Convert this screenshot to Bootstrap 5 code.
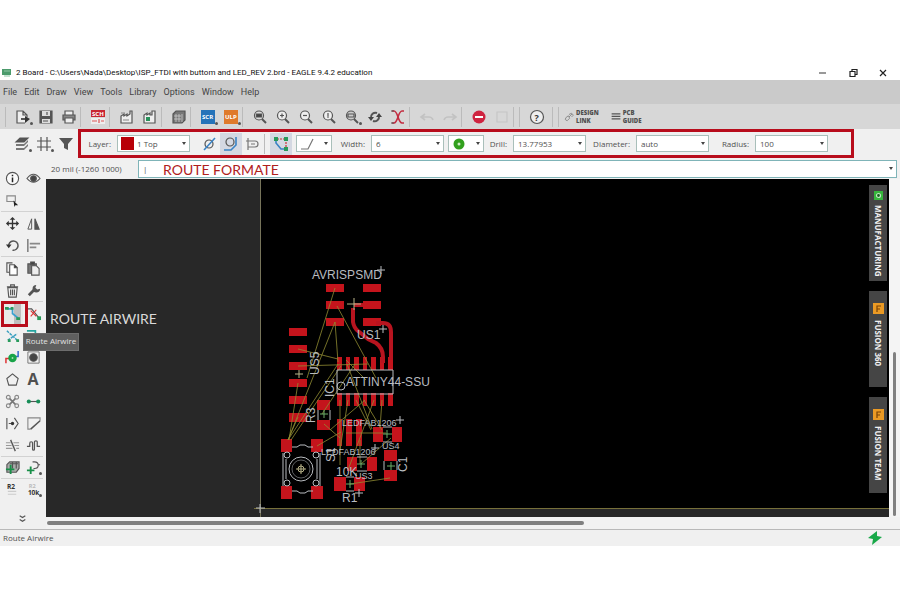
<!DOCTYPE html>
<html lang="en">
<head>
<meta charset="utf-8">
<meta name="viewport" content="width=device-width, initial-scale=1">
<title>2 Board - EAGLE 9.4.2 education</title>
<link rel="stylesheet" href="https://cdn.jsdelivr.net/npm/bootstrap@5.3.0/dist/css/bootstrap.min.css">
<style>
body{font-family:"Open Sans","Noto Sans",sans-serif;font-size:9px;line-height:12px;color:#505050;background:#fff;padding-top:66px}
button,select,input{font:inherit;color:inherit}
svg{display:block;flex:none}
.ic{width:16px;height:16px;fill:none;stroke:#555;stroke-width:1.2;overflow:visible}
.ic text{stroke:none;font-weight:700}
.titlebar{height:14px;color:#111;font-family:Roboto,sans-serif;font-size:8px;padding:0 2px}
.titlebar .ic{width:10px;height:10px}
.tool.winbtn{width:30px}
.menubar{height:24px;background:#cacaca;padding-left:3px;gap:7px;font-family:Roboto,sans-serif}
.menubar a{color:#444;text-decoration:none}
.toolbar-main{height:25px;background:#d7d7d7;padding-left:5px}
.tool{width:23px;height:22px;border:0;padding:0;background:none;display:flex;align-items:center;justify-content:center;position:relative}
.tool.drop::after,.ptool.drop::after{content:"";position:absolute;right:1px;bottom:3px;width:3px;height:3px;border-radius:50%;background:#555}
.sep{width:6px;height:20px;flex:none;border-left:1px solid #bbb}
.linkbtn{border:0;background:none;padding:0 6px;font-size:6px;font-weight:700;text-align:left;gap:2px}
.linkbtn b{display:block;line-height:8px}
.linkbtn .ic{width:10px;height:10px}
.params{height:29px;background:#f0f0f0;padding-left:11px}
.params .tool{width:22px}
.marked{border:3px solid #b80d1c;margin-right:46px;margin-left:1px;height:29px}
.tool.on{background:#d4d8e2}
.field{justify-content:flex-end;gap:6px;font-size:8px}
.w-a{width:109px}.w-b{width:112px}.w-c{width:102px}.w-d{width:123px}.w-e{width:119px}
.combo{width:73px;height:17px;background:#fff;border:1px solid #a9bfba;padding:0 3px}
.combo select,.combo input{border:0;background:none;appearance:none;padding:0 0 0 1px;min-width:0;flex:1;outline:0}
.combo.small-combo{width:36px}
.combo.small-combo select{color:transparent;padding:0}
.combo.small-combo option{color:#444}
.arrow{width:4px;height:3px;fill:#444}
.swatch{width:13px;height:13px;background:#b80008;flex:none;margin-right:2px}
.palette{width:46px;background:#f0f0f0;padding:9px 3px 0 1px}
.grp{border-bottom:1px solid #d2d2d2;display:grid;grid-template-columns:22px 20px}
.grp.tight{margin-top:-1px}
.ptool{height:22px;border:0;padding:0;background:none;display:flex;align-items:center;justify-content:center;position:relative}
.ptool .ic{width:15px;height:15px}
.airframe{position:absolute;left:0;top:-1px;width:27px;height:26px;border:3px solid #b80d1c;z-index:3}
.ptool.on{background:linear-gradient(90deg,#e9e9e9 60%,#bebebe 60% 90%,#e9e9e9 90%)}
.tip{position:absolute;left:22px;top:31px;width:56px;height:18px;background:#5f5f5f;color:#e2e2e2;font-size:8px;line-height:14px;border:1px solid #6d6d6d;z-index:4;white-space:nowrap}
.cmdrow{height:21px;background:#f0f0f0;font-size:8px;padding:0 3px 0 5px}
.cmdrow label{width:87px}
.cmd{height:18px;border:1px solid #7fb4b8}
.note{position:absolute;font-family:Lato,sans-serif;font-size:14px;line-height:18px;white-space:nowrap;pointer-events:none}
.canvas{background:#282828}
.tabs{position:absolute;top:6px;right:2px;gap:10px}
.sidetab{width:18px;height:96px;border:0;background:#454545;color:#f2f2f2;font-size:8px;line-height:16px;font-weight:700;padding:5px 0;gap:4px}
.sidetab.fus{padding-top:12px;gap:6px}
.sidetab span{writing-mode:vertical-rl}
.sidetab .ic{width:11px;height:11px}
.vscroll{width:11px;background:#f4f4f4;padding:173px 4px 1px}
.hscroll{height:12px;background:#f2f2f2;padding:4px 0 0 1px}
.thumb{background:#808080;border-radius:2px}
.hscroll .thumb{width:63%;height:4px}
.statusbar{height:17px;background:#f0f0f0;border-top:1px solid #b9b9b9;padding:0 18px 0 3px;font-size:8px}
.statusbar .ic{width:14px;height:14px}
.silk{fill:none;stroke:#b9bcc0;stroke-width:1}
.silktext{font-family:"Liberation Sans",sans-serif;fill:#b9bcc0;font-size:12px}
.silktext .fine{font-size:9px}
</style>
<script src="https://cdn.jsdelivr.net/npm/bootstrap@5.3.0/dist/js/bootstrap.bundle.min.js"></script>
</head>
<body>
<header>
<div class="titlebar d-flex align-items-center">
<svg class="ic me-1" viewBox="0 0 10 10"><path d="M0 1h9v6H0z" fill="#4c9b6c" stroke="none"/><path d="M2 8h6M2 3h6" stroke="#8fc7a6"/></svg>
<span>2 Board - C:\Users\Nada\Desktop\ISP_FTDI with buttom and LED_REV 2.brd - EAGLE 9.4.2 education</span>
<div class="ms-auto d-flex">
<button class="tool winbtn" aria-label="Minimize"><svg class="ic" viewBox="0 0 10 10"><path d="M1 5h7"/></svg></button>
<button class="tool winbtn" aria-label="Restore"><svg class="ic" viewBox="0 0 10 10"><path d="M2 3.500h5v5H2zM4 3V1.500h5v5H7" stroke="#222"/></svg></button>
<button class="tool winbtn" aria-label="Close"><svg class="ic" viewBox="0 0 10 10"><path d="M2 2l6 6M8 2l-6 6" stroke="#222"/></svg></button>
</div></div>
<nav class="menubar d-flex align-items-center" aria-label="Menu"><a href="#">File</a><a href="#">Edit</a><a href="#">Draw</a><a href="#">View</a><a href="#">Tools</a><a href="#">Library</a><a href="#">Options</a><a href="#">Window</a><a href="#">Help</a></nav>
<div class="toolbar-main d-flex align-items-center" role="toolbar" aria-label="Main">
<span class="sep"></span>
<button class="tool drop" aria-label="Open"><svg class="ic" viewBox="0 0 16 16"><path d="M10 14H2V2h6l4 4v2M8 2v4h4" fill="#eee"/><path d="M6 10h5" stroke-width="2"/><path d="M10 7l5 3-5 4z" fill="#333" stroke="none"/></svg></button>
<button class="tool" aria-label="Save"><svg class="ic" viewBox="0 0 16 16"><path d="M2 2h12v12H2z" fill="#555"/><path d="M4 2h8v5H4zM4 10h8v4H4z" fill="#ddd" stroke="none"/><path d="M9 3v3M5 12h5"/></svg></button>
<button class="tool" aria-label="Print"><svg class="ic" viewBox="0 0 16 16"><path d="M4 6V2h8v4" fill="#eee"/><path d="M2 6h12v5H2z" fill="#888"/><path d="M4 9h8v5H4z" fill="#eee"/></svg></button>
<span class="sep"></span>
<button class="tool" aria-label="Schematic"><svg class="ic" viewBox="0 0 16 16"><path d="M1 1h14v7H1z" fill="#c82532" stroke="none"/><path d="M1 9h14v6H1z" fill="#eee" stroke="none"/><text x="2" y="7" font-size="6" fill="#fff">SCH</text><path d="M2 12h5M9 10v4M11 12h3" stroke="#d55"/></svg></button>
<span class="sep"></span>
<button class="tool" aria-label="CAM"><svg class="ic" viewBox="0 0 16 16"><path d="M2 14V7l3-2v2l3-2v2l3-2V2h2v12z" fill="#eee"/><path d="M4 11h6M2 4h4" stroke="#888"/></svg></button>
<button class="tool" aria-label="Manufacturing preview"><svg class="ic" viewBox="0 0 16 16"><path d="M2 14V6l3-2v2l3-2v2h2V2h3v12z" fill="#eee"/><path d="M4 8h4v4H4z" fill="#27925a" stroke="none"/></svg></button>
<span class="sep"></span>
<button class="tool" aria-label="Library"><svg class="ic" viewBox="0 0 16 16"><path d="M2 5l3-3h9v9l-3 3H2z" fill="#777"/><path d="M3 7h7M3 10h7M5 5v8M8 5v8M11 5v8" stroke="#ccc" stroke-width=".8"/></svg></button>
<span class="sep"></span>
<button class="tool drop" aria-label="Script"><svg class="ic" viewBox="0 0 16 16"><path d="M1 1h14v14H1z" fill="#2573b9" stroke="none"/><text x="2" y="10" font-size="6" fill="#fff">SCR</text></svg></button>
<button class="tool drop" aria-label="ULP"><svg class="ic" viewBox="0 0 16 16"><path d="M1 1h14v14H1z" fill="#df7a2b" stroke="none"/><text x="2" y="10" font-size="6" fill="#fff">ULP</text></svg></button>
<span class="sep"></span>
<button class="tool" aria-label="Zoom fit"><svg class="ic" viewBox="0 0 16 16"><circle cx="7" cy="6.500" r="4.500" fill="#ddd"/><path d="M10 10l4 4" stroke-width="2"/><path d="M4.500 5h5v3h-5z" fill="#444"/></svg></button>
<button class="tool" aria-label="Zoom in"><svg class="ic" viewBox="0 0 16 16"><circle cx="7" cy="6.500" r="4.500" fill="#eee"/><path d="M10 10l4 4" stroke-width="2"/><path d="M5 6.500h4M7 4.500v4"/></svg></button>
<button class="tool" aria-label="Zoom out"><svg class="ic" viewBox="0 0 16 16"><circle cx="7" cy="6.500" r="4.500" fill="#eee"/><path d="M10 10l4 4" stroke-width="2"/><path d="M5 6.500h4"/></svg></button>
<button class="tool" aria-label="Zoom redraw"><svg class="ic" viewBox="0 0 16 16"><circle cx="7" cy="6.500" r="4.500" fill="#eee"/><path d="M10 10l4 4" stroke-width="2"/><path d="M7 4v3M6 8h2"/></svg></button>
<button class="tool drop" aria-label="Zoom select"><svg class="ic" viewBox="0 0 16 16"><circle cx="7" cy="6.500" r="4.500" fill="#ccc"/><path d="M10 10l4 4" stroke-width="2"/><path d="M4 5h6v3H4z"/></svg></button>
<button class="tool" aria-label="Refresh"><svg class="ic" viewBox="0 0 16 16"><path d="M4 9a4.500 4.500 0 0 1 6-5M12 7a4.500 4.500 0 0 1-6 5" stroke-width="2"/><path d="M1 8h6l-3 4zM9 8h6l-3-4z" fill="#444" stroke="none"/></svg></button>
<button class="tool" aria-label="Ripup all"><svg class="ic" viewBox="0 0 16 16"><path d="M2 2h2c4 0 4 12 8 12h2" stroke="#c32c40" stroke-width="1.600"/><path d="M14 2h-2C8 2 8 14 4 14H2" stroke="#c32c40" stroke-width="1.600"/><path d="M1 2h3M1 14h3" stroke="#555"/></svg></button>
<span class="sep"></span>
<button class="tool" aria-label="Undo"><svg class="ic" viewBox="0 0 16 16"><path d="M6 5L2 8l4 3M3 8h7q3 0 4 3" stroke="#c2c2c2" stroke-width="1.600"/></svg></button>
<button class="tool" aria-label="Redo"><svg class="ic" viewBox="0 0 16 16"><path d="M10 5l4 3-4 3M13 8H6q-3 0-4 3" stroke="#c2c2c2" stroke-width="1.600"/></svg></button>
<span class="sep"></span>
<button class="tool" aria-label="Stop"><svg class="ic" viewBox="0 0 16 16"><circle cx="8" cy="8" r="6.500" fill="#cf2440" stroke="none"/><path d="M4 8h8" stroke="#fff" stroke-width="2"/></svg></button>
<button class="tool" aria-label="Go"><svg class="ic" viewBox="0 0 16 16"><path d="M3 3h10v10H3z" stroke="#c6c6c6"/></svg></button>
<span class="sep"></span><span class="sep"></span>
<button class="tool" aria-label="Help"><svg class="ic" viewBox="0 0 16 16"><circle cx="8" cy="8" r="6.500" fill="#eee"/><text x="5.500" y="11.500" font-size="9" fill="#333">?</text></svg></button>
<span class="sep ms-1"></span><span class="sep"></span>
<button class="linkbtn d-flex align-items-center ps-0"><svg class="ic" viewBox="0 0 16 16"><path d="M8 8l5-5M3 9l4-3 2 4-4 4-3-2zM8 4l4-2 3 3-3 3" stroke="#777"/></svg><span><b>DESIGN</b><b>LINK</b></span></button>
<button class="linkbtn d-flex align-items-center"><svg class="ic" viewBox="0 0 16 16"><path d="M1 3h14M1 7h14M1 11h14" stroke-width="2"/></svg><span><b>PCB</b><b>GUIDE</b></span></button>
</div>
<div class="params d-flex align-items-center">
<button class="tool drop" aria-label="Layers"><svg class="ic" viewBox="0 0 16 16"><path d="M2 6l4-4h8l-4 4z" fill="#555"/><path d="M2 8h8l4-4v2l-4 4H2zM2 12h8l4-4v2l-4 4H2z" fill="#777" stroke="none"/></svg></button>
<button class="tool drop" aria-label="Grid"><svg class="ic" viewBox="0 0 16 16"><path d="M5 1v14M11 1v14M1 5h14M1 11h14"/></svg></button>
<button class="tool" aria-label="Filter"><svg class="ic" viewBox="0 0 16 16"><path d="M1 2h14L10 8v6l-4-2V8z" fill="#555" stroke="none"/></svg></button>
<div class="marked flex-fill d-flex align-items-center">
<div class="field w-a d-flex align-items-center"><label for="layer">Layer:</label><div class="combo d-flex align-items-center"><span class="swatch"></span><select id="layer"><option>1 Top</option></select><svg class="arrow" viewBox="0 0 4 3"><path d="M0 0h4L2 3z"/></svg></div></div>
<span class="ms-2"></span>
<button class="tool" aria-label="Ignore obstacles"><svg class="ic" viewBox="0 0 16 16"><circle cx="8" cy="8" r="4"/><path d="M3 14L14 2" stroke="#3a83c5" stroke-width="1.600"/></svg></button>
<button class="tool on" aria-label="Walkaround obstacles"><svg class="ic" viewBox="0 0 16 16"><circle cx="7" cy="6" r="4"/><path d="M1 14h7l5-5V1" stroke="#3a83c5" stroke-width="1.600"/></svg></button>
<button class="tool" aria-label="Push obstacles"><svg class="ic" viewBox="0 0 16 16"><path d="M3 2v12M1 5h9a3 3 0 0 1 0 6H3M6 8h4" stroke="#777"/></svg></button>
<span class="sep"></span>
<button class="tool on" aria-label="Follow airwire"><svg class="ic" viewBox="0 0 16 16"><path d="M3 3v4l5 6h5" stroke="#3a83c5" stroke-width="1.600"/><path d="M4 3h9v9" stroke="#c33" stroke-dasharray="2 1"/><path d="M1 1h4v4H1zM11 11h4v4h-4z" fill="#299a5a" stroke="none"/><path d="M11 1h4v4h-4z" fill="#299a5a" stroke="none"/></svg></button>
<span class="ms-1"></span>
<div class="combo small-combo d-flex align-items-center"><svg class="ic" viewBox="0 0 16 16"><path d="M1 13h7l5-10" stroke="#777"/></svg><select aria-label="Wire bend"><option>1</option></select><svg class="arrow" viewBox="0 0 4 3"><path d="M0 0h4L2 3z"/></svg></div>
<div class="field w-b d-flex align-items-center"><label for="width">Width:</label><div class="combo d-flex align-items-center"><select id="width"><option>6</option></select><svg class="arrow" viewBox="0 0 4 3"><path d="M0 0h4L2 3z"/></svg></div></div>
<span class="ms-1"></span>
<div class="combo small-combo d-flex align-items-center"><svg class="ic" viewBox="0 0 16 16"><circle cx="7" cy="8" r="5.500" fill="#32a01d" stroke="none"/><circle cx="7" cy="8" r="1.500" fill="#cfeec4" stroke="none"/></svg><select aria-label="Via shape"><option>Round</option></select><svg class="arrow" viewBox="0 0 4 3"><path d="M0 0h4L2 3z"/></svg></div>
<div class="field w-c d-flex align-items-center"><label for="drill">Drill:</label><div class="combo d-flex align-items-center"><select id="drill"><option>13.77953</option></select><svg class="arrow" viewBox="0 0 4 3"><path d="M0 0h4L2 3z"/></svg></div></div>
<div class="field w-d d-flex align-items-center"><label for="dia">Diameter:</label><div class="combo d-flex align-items-center"><select id="dia"><option>auto</option></select><svg class="arrow" viewBox="0 0 4 3"><path d="M0 0h4L2 3z"/></svg></div></div>
<div class="field w-e d-flex align-items-center"><label for="radius">Radius:</label><div class="combo d-flex align-items-center"><select id="radius"><option>100</option></select><svg class="arrow" viewBox="0 0 4 3"><path d="M0 0h4L2 3z"/></svg></div></div>
</div></div>
</header>
<main class="d-flex">
<aside class="palette flex-shrink-0 d-flex flex-column" aria-label="Tools">
<div class="grp">
<button class="ptool" aria-label="Info"><svg class="ic" viewBox="0 0 16 16"><circle cx="8" cy="8" r="6.500" fill="#fafafa"/><path d="M8 7v5M8 4v1.500" stroke="#222" stroke-width="1.600"/></svg></button>
<button class="ptool" aria-label="Show"><svg class="ic" viewBox="0 0 16 16"><path d="M1 8q7-9 14 0q-7 8-14 0z"/><circle cx="8" cy="8" r="3" fill="#444"/></svg></button>
<button class="ptool" aria-label="Group"><svg class="ic" viewBox="0 0 16 16"><path d="M2 3h9v6H2z" stroke="#888"/><path d="M9 8l5 5h-3l-1 2z" fill="#222" stroke="none"/></svg></button>
</div>
<div class="grp">
<button class="ptool" aria-label="Move"><svg class="ic" viewBox="0 0 16 16"><path d="M3 8h10M8 3v10" stroke="#333" stroke-width="1.400"/><path d="M8 1l3 3H5zM8 15l3-3H5zM1 8l3-3v6zM15 8l-3-3v6z" fill="#333" stroke="none"/></svg></button>
<button class="ptool" aria-label="Mirror"><svg class="ic" viewBox="0 0 16 16"><path d="M6 3v11H2z" stroke-width="1"/><path d="M9.500 3v11H14z" fill="#555"/></svg></button>
<button class="ptool" aria-label="Rotate"><svg class="ic" viewBox="0 0 16 16"><path d="M4 9a5 5 0 1 1 4 4" stroke-width="1.600"/><path d="M1 7h6l-3 4z" fill="#333" stroke="none"/></svg></button>
<button class="ptool" aria-label="Align"><svg class="ic" viewBox="0 0 16 16"><path d="M2 1v14"/><path d="M4 6h11M4 10h7" stroke-width="2" stroke="#888"/></svg></button>
</div>
<div class="grp">
<button class="ptool" aria-label="Copy"><svg class="ic" viewBox="0 0 16 16"><path d="M5 12H2V2h6"/><path d="M5 4h5l3 3v8H5z" fill="#fff"/><path d="M10 4v3h3" fill="#333"/></svg></button>
<button class="ptool" aria-label="Paste"><svg class="ic" viewBox="0 0 16 16"><path d="M2 3h9v10H2z" fill="#777"/><path d="M6 5h5l3 3v7H6z" fill="#eee"/><path d="M5 1h4v3H5z" fill="#444"/></svg></button>
<button class="ptool" aria-label="Delete"><svg class="ic" viewBox="0 0 16 16"><path d="M3 5l1 10h8l1-10zM6 7v6M8 7v6M10 7v6M2 4h12M6 4V2h4v2"/></svg></button>
<button class="ptool" aria-label="Change"><svg class="ic" viewBox="0 0 16 16"><path d="M3 13l6-6" stroke-width="3"/><path d="M11 2a4 4 0 1 0 4 4l-3 1-2-2z" fill="#555" stroke="none"/></svg></button>
</div>
<div class="grp position-relative">
<button class="ptool on" aria-label="Route Airwire"><svg class="ic" viewBox="0 0 16 16"><path d="M2 3h6v5l6 5" stroke="#3aa0d0" stroke-width="1.800"/><path d="M0 1h4v3H0zM6 1h3v3H6zM12 12h4v3h-4z" fill="#299a5a" stroke="none"/></svg></button>
<button class="ptool" aria-label="Ripup"><svg class="ic" viewBox="0 0 16 16"><path d="M2 3h4l8 10" stroke="#555"/><path d="M5 5l6 6M11 4l-6 7" stroke="#d33"/><path d="M12 11h4v4h-4z" fill="#299a5a" stroke="none"/></svg></button>
<span class="airframe"></span><span class="tip text-center" role="tooltip">Route Airwire</span>
<button class="ptool" aria-label="Split"><svg class="ic" viewBox="0 0 16 16"><path d="M2 3l11 10M3 13l10-7" stroke="#3a9fc0" stroke-dasharray="3 1" stroke-width="1.600"/><path d="M3 12h3v3H3zM12 12h3v3h-3z" fill="#299a5a" stroke="none"/></svg></button>
<button class="ptool" aria-label="Route multiple"><svg class="ic" viewBox="0 0 16 16"><path d="M1 3h9v9" stroke="#27a5a0" stroke-width="1.800"/><path d="M4 8h5v6" stroke="#299a5a"/></svg></button>
<button class="ptool" aria-label="Via"><svg class="ic" viewBox="0 0 16 16"><path d="M1 14V9h4" stroke="#d33" stroke-width="1.600"/><path d="M11 7h3V1" stroke="#36c" stroke-width="1.600"/><circle cx="8" cy="8.500" r="4.500" fill="#18a348" stroke="none"/><circle cx="8" cy="8.500" r="1" fill="#a7e0b5" stroke="none"/></svg></button>
<button class="ptool" aria-label="Hole"><svg class="ic" viewBox="0 0 16 16"><path d="M2 2h12v12H2z" stroke-width=".8"/><circle cx="8" cy="8" r="4" fill="#444"/></svg></button>
<button class="ptool" aria-label="Polygon"><svg class="ic" viewBox="0 0 16 16"><path d="M8 2l6 5-2 7H4L2 7z"/></svg></button>
<button class="ptool fs-6 fw-bold lh-1 overflow-visible" aria-label="Text">A</button>
<button class="ptool" aria-label="Ratsnest"><svg class="ic" viewBox="0 0 16 16"><g stroke="#888"><circle cx="3.500" cy="3.500" r="2"/><circle cx="12.500" cy="3.500" r="2"/><circle cx="3.500" cy="12.500" r="2"/><circle cx="12.500" cy="12.500" r="2"/></g><path d="M5 5l6 6M11 5l-6 6" stroke="#777" stroke-width="1.800"/></svg></button>
<button class="ptool" aria-label="Signal"><svg class="ic" viewBox="0 0 16 16"><path d="M3 8h10"/><circle cx="3" cy="8" r="2.200" fill="#188e58" stroke="none"/><circle cx="13" cy="8" r="2.200" fill="#188e58" stroke="none"/></svg></button>
<button class="ptool" aria-label="Fanout"><svg class="ic" viewBox="0 0 16 16"><path d="M2 2v12M4 8h5M10 2l4 6-4 6"/><circle cx="8" cy="8" r="1.800" fill="#333" stroke="none"/></svg></button>
<button class="ptool" aria-label="Miter"><svg class="ic" viewBox="0 0 16 16"><path d="M15 5V2H2v12h3" stroke="#888"/><path d="M5 14L15 5" stroke-width="1.600"/></svg></button>
<button class="ptool" aria-label="Slice"><svg class="ic" viewBox="0 0 16 16"><path d="M1 5h5M1 8h6M1 11h7M9 5h6M10 8h5M12 11h3" stroke="#999"/><path d="M6 2l5 12" stroke-width="1.400"/></svg></button>
<button class="ptool" aria-label="Meander"><svg class="ic" viewBox="0 0 16 16"><path d="M1 9h3V6q0-2 1.500-2T7 6v6q0 1 1 1t1-1V4q0-1 1.500-1T12 4v5h3" stroke-width="1.300"/></svg></button>
</div>
<div class="grp tight">
<button class="ptool" aria-label="Add part"><svg class="ic" viewBox="0 0 16 16"><path d="M2 5l3-3h10v7l-3 4H2z" fill="#aaa"/><path d="M5 4h9M8 2v7M12 2v7" stroke="#555"/><path d="M1 10h9M6 5v10" stroke="#188e48" stroke-width="2"/></svg></button>
<button class="ptool drop" aria-label="Replace"><svg class="ic" viewBox="0 0 16 16"><path d="M7 2h2q4 0 4 3.500T9 9H8M13 5h2"/><path d="M1 11h8M5 7v8" stroke="#188e48" stroke-width="2"/></svg></button>
</div>
<div class="grp tight border-0">
<button class="ptool" aria-label="Name"><svg class="ic" viewBox="0 0 16 16"><text x="2" y="7" font-size="7" fill="#333">R2</text><path d="M3 10h9M3 13h9" stroke="#ccc"/></svg></button>
<button class="ptool drop" aria-label="Value"><svg class="ic" viewBox="0 0 16 16"><text x="3" y="6" font-size="6" fill="#bbb">R2</text><text x="2" y="14" font-size="7" fill="#333">10k</text></svg></button>
</div>
<button class="ptool mt-auto" aria-label="More tools"><svg class="ic" viewBox="0 0 16 16"><path d="M5 5l3 2 3-2M5 9l3 2 3-2"/></svg></button>
</aside>
<section class="flex-fill overflow-hidden">
<div class="cmdrow d-flex align-items-center position-relative">
<label for="cmd">20 mil (-1260 1000)</label>
<div class="cmd combo flex-fill d-flex align-items-center"><input id="cmd" value="|"><svg class="arrow" viewBox="0 0 4 3"><path d="M0 0h4L2 3z"/></svg></div>
<span class="note" style="left:117px;top:3px;color:#b0201c">ROUTE FORMATE</span>
</div>
<div class="d-flex">
<div class="canvas flex-fill position-relative">
<svg class="w-100" viewBox="46 179 843 338" role="img" aria-label="Board layout">
<path d="M261 179h628v329H261z" fill="#000"/>
<path d="M260.500 179v338" stroke="#77745a"/><path d="M254 508.500h635" stroke="#77703a"/>
<g fill="#c4141c">
<path d="M326 284h18v8h-18zM363 284h18v8h-18zM326 301h18v8h-18zM363 301h18v8h-18zM326 318h18v8h-18zM363 318h18v8h-18z"/>
<path d="M289 328h18v8h-18zM289 345h18v8h-18zM289 362h18v8h-18zM289 379h18v8h-18zM289 396h18v8h-18zM289 413h18v9h-18z"/>
<path d="M337 357h5v13h-5zM346 357h4v13h-4zM354 357h5v13h-5zM363 357h4v13h-4zM371 357h5v13h-5zM380 357h4v13h-4zM388 357h5v13h-5zM337 393h5v13h-5zM346 393h4v13h-4zM354 393h5v13h-5zM363 393h4v13h-4zM371 393h5v13h-5zM380 393h4v13h-4zM388 393h5v13h-5z"/>
<path d="M317 400h13v10h-13zM317 420h13v10h-13zM337 419h5v27h-5zM346 419h6v27h-6zM356 419h6v27h-6zM373 427h10v15h-10zM392 427h10v15h-10zM347 457h10v14h-10zM367 457h10v14h-10zM384 450h13v11h-13zM384 470h13v11h-13zM334 477h12v14h-12zM354 477h11v14h-11z"/>
<path d="M281 439h11v13h-11zM311 439h12v13h-12zM281 486h11v13h-11zM311 486h12v13h-12z"/>
</g>
<g fill="none" stroke="#b8141f" stroke-width="4"><path d="M363 305h-9M353 308v14q1 6 5 9t10 8l8 4q7 5 7 14v6"/><path d="M376 323h7q8 0 8 9v28"/></g>
<g fill="none" stroke="#918c32" stroke-width=".8">
<path d="M335 288L307 378M335 322L288 440M335 322l3 40M337 306l39 72M298 349l40 10M298 366l70-2M298 383L289 440M338 364l-50 76M341 366l-50 74M347 364l25 65M355 364l-33 50M340 400v65M348 400l-8 50M374 400l-26 70M364 400l18 30M356 400l15 30M382 400l-2 28M346 433h40M324 424l16 14M317 446l24-14M298 417l-10 23M361 464l30-26M350 484l40-6M365 400l-35 30M346 360l20 20M360 440v24"/>
</g>
<g class="silk">
<path d="M337 370h56v24h-56z"/><circle cx="341" cy="386" r="4"/>
<path d="M318 410v10M330 410v10M383 427h9M383 442h9M357 457h10M357 471h10M384 461v9M397 461v9M346 477h8M346 491h8"/>
<path d="M283 453v33M320 453v33M286 459v20M317 459v20M292 447h5l3-2h5l3 2h5M292 491h5l3 2h5l3-2h5"/>
<circle cx="301" cy="469" r="12"/><circle cx="301" cy="469" r="9" stroke-width=".5"/><circle cx="287" cy="455" r="3"/><circle cx="316" cy="455" r="3"/><circle cx="287" cy="483" r="3"/><circle cx="316" cy="483" r="3"/>
<path d="M377 270h8M381 266v8M379 329h8M383 325v8M396 420h8M400 416v8M371 448h8M375 444v8M355 493h8M359 489v8M256 508h9M260 504v9"/>
</g>
<g fill="none" stroke="#b9b489"><path d="M347 304h14M354 298v12M295 374h8M299 370v8M296 469h10M301 464v10"/><circle cx="301" cy="469" r="3"/></g>
<path d="M320 414h8M324 410v8M383 434h9M387 430v8M357 464h8M361 460v8M387 466h8M391 462v8M346 484h8M350 480v8" stroke="#6dae68"/>
<g class="silktext">
<text x="312" y="279">AVRISPSMD</text><text x="357" y="339">US1</text><text x="346" y="386">ATTINY44-SSU</text>
<text transform="translate(319 375) rotate(-90)">US5</text><text transform="translate(334 397) rotate(-90)">IC1</text><text transform="translate(315 423) rotate(-90)">R3</text><text transform="translate(407 472) rotate(-90)">C1</text><text transform="translate(335 462) rotate(-90)">S1</text>
<text x="336" y="476">10K</text><text x="342" y="502">R1</text>
<g class="fine"><text x="342" y="426">LEDFAB1206</text><text x="321" y="455">LEDFAB1206</text><text x="382" y="449">US4</text><text x="355" y="479">US3</text></g>
</g>
</svg>
<span class="note" style="left:4px;top:131px;color:#dadada">ROUTE AIRWIRE</span>
<div class="tabs d-flex flex-column">
<button class="sidetab d-flex flex-column align-items-center"><svg class="ic" viewBox="0 0 11 11"><path d="M1 1h9v9H1z" fill="#36b63c" stroke="none"/><circle cx="5.500" cy="5.500" r="2" fill="#185f20" stroke="#bfe8bf"/></svg><span>MANUFACTURING</span></button>
<button class="sidetab fus d-flex flex-column align-items-center"><svg class="ic" viewBox="0 0 11 11"><path d="M0 0h11v11H0z" fill="#eb9a24" stroke="none"/><path d="M4 9V3h4M4 6h3" stroke="#7a4305"/></svg><span>FUSION 360</span></button>
<button class="sidetab fus d-flex flex-column align-items-center"><svg class="ic" viewBox="0 0 11 11"><path d="M0 0h11v11H0z" fill="#eb9a24" stroke="none"/><path d="M4 9V3h4M4 6h3" stroke="#7a4305"/></svg><span>FUSION TEAM</span></button>
</div>
</div>
<div class="vscroll d-flex"><div class="thumb flex-fill"></div></div>
</div>
<div class="hscroll"><div class="thumb"></div></div>
</section>
</main>
<footer class="statusbar d-flex align-items-center justify-content-between"><span>Route Airwire</span><svg class="ic" viewBox="0 0 14 14"><path d="M9 0L0 7l5 1-1 6 10-8-5-1z" fill="#18a848" stroke="none"/></svg></footer>
</body>
</html>
